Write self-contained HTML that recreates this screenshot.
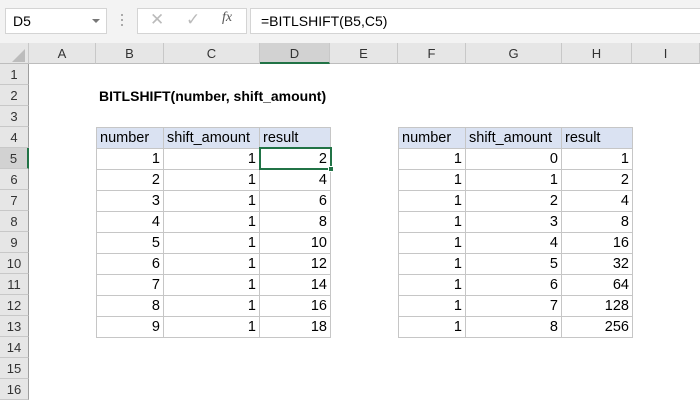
<!DOCTYPE html><html><head><style>
body{margin:0;width:700px;height:400px;overflow:hidden;background:#fff;font-family:"Liberation Sans",Arial,sans-serif;position:relative}
.a{position:absolute;box-sizing:border-box}
.top{left:0;top:0;width:700px;height:43px;background:#f3f3f3}
.box{background:#fff;border:1px solid #d4d4d4}
.ch{top:43px;height:21px;background:#e6e6e6;border-right:1px solid #c8c8c8;border-bottom:1px solid #bdbdbd;font-size:13px;color:#333;text-align:center;line-height:21px}
.rh{left:0;width:29px;height:21px;background:#e6e6e6;border-bottom:1px solid #c8c8c8;border-right:1px solid #9e9e9e;font-size:13px;color:#333;text-align:center;line-height:21px}
.c{height:21px;border-right:1px solid #c6c6c6;border-bottom:1px solid #c6c6c6;font-size:14.5px;line-height:21px;padding:0 3px;color:#000;white-space:nowrap}
.r{text-align:right}
.h{background:#dae2f2}
</style></head><body>
<div class="a top"></div>
<div class="a box" style="left:5px;top:8px;width:102px;height:26px;font-size:14px;line-height:24px;padding-left:7px">D5</div>
<div class="a" style="left:92px;top:19px;width:0;height:0;border-left:4px solid transparent;border-right:4px solid transparent;border-top:4px solid #777"></div>
<div class="a" style="left:121px;top:14px;width:2px;height:14px;background:repeating-linear-gradient(#aaa 0 2px,transparent 2px 5px)"></div>
<div class="a box" style="left:137px;top:8px;width:110px;height:26px"></div>
<div class="a" style="left:150px;top:10px;font-size:17px;color:#bbb">✕</div>
<div class="a" style="left:186px;top:10px;font-size:17px;color:#bbb">✓</div>
<div class="a" style="left:222px;top:10px;font-size:14px;font-style:italic;font-family:'Liberation Serif',serif;color:#555">fx</div>
<div class="a box" style="left:250px;top:8px;width:460px;height:26px;font-size:14px;line-height:24px;padding-left:10px">=BITLSHIFT(B5,C5)</div>
<div class="a" style="left:0;top:43px;width:29px;height:21px;background:#e6e6e6;border-right:1px solid #c8c8c8;border-bottom:1px solid #bdbdbd;box-sizing:border-box"></div>
<div class="a" style="left:12px;top:49px;width:0;height:0;border-left:13px solid transparent;border-bottom:13px solid #bcbcbc"></div>
<div class="a ch" style="left:29px;width:67px">A</div>
<div class="a ch" style="left:96px;width:68px">B</div>
<div class="a ch" style="left:164px;width:96px">C</div>
<div class="a ch" style="left:260px;width:70px;background:#d2d2d2;border-bottom:2px solid #217346">D</div>
<div class="a ch" style="left:330px;width:68px">E</div>
<div class="a ch" style="left:398px;width:68px">F</div>
<div class="a ch" style="left:466px;width:96px">G</div>
<div class="a ch" style="left:562px;width:70px">H</div>
<div class="a ch" style="left:632px;width:68px">I</div>
<div class="a rh" style="top:64px">1</div><div class="a rh" style="top:85px">2</div><div class="a rh" style="top:106px">3</div><div class="a rh" style="top:127px">4</div>
<div class="a rh" style="top:148px;background:#d2d2d2;border-right:2px solid #217346">5</div>
<div class="a rh" style="top:169px">6</div><div class="a rh" style="top:190px">7</div><div class="a rh" style="top:211px">8</div><div class="a rh" style="top:232px">9</div><div class="a rh" style="top:253px">10</div><div class="a rh" style="top:274px">11</div><div class="a rh" style="top:295px">12</div><div class="a rh" style="top:316px">13</div><div class="a rh" style="top:337px">14</div><div class="a rh" style="top:358px">15</div><div class="a rh" style="top:379px">16</div>
<div class="a" style="left:99px;top:85px;height:21px;line-height:22px;font-size:14px;font-weight:bold">BITLSHIFT(number, shift_amount)</div>
<div class="a" style="left:96px;top:127px;width:235px;height:211px;border-left:1px solid #c6c6c6;border-top:1px solid #c6c6c6"></div>
<div class="a" style="left:398px;top:127px;width:235px;height:211px;border-left:1px solid #c6c6c6;border-top:1px solid #c6c6c6"></div>
<div id="t"></div>
<script>
var L=[[97,67],[164,96],[260,71]],R=[[399,67],[466,96],[562,71]];
var h='';
function cell(x,w,y,t,cls){h+='<div class="a c '+cls+'" style="left:'+x+'px;top:'+y+'px;width:'+w+'px;height:21px">'+t+'</div>';}
var hd=['number','shift_amount','result'];
for(var i=0;i<3;i++){cell(L[i][0],L[i][1],128,hd[i],'h');cell(R[i][0],R[i][1],128,hd[i],'h');}
for(var r=0;r<9;r++){var y=149+21*r;
cell(L[0][0],L[0][1],y,r+1,'r');cell(L[1][0],L[1][1],y,1,'r');cell(L[2][0],L[2][1],y,2*(r+1),'r');
cell(R[0][0],R[0][1],y,1,'r');cell(R[1][0],R[1][1],y,r,'r');cell(R[2][0],R[2][1],y,Math.pow(2,r),'r');}
document.getElementById('t').innerHTML=h;
</script>
<div class="a" style="left:259px;top:147px;width:73px;height:23px;border:2px solid #217346"></div>
<div class="a" style="left:328px;top:166px;width:6px;height:6px;background:#217346;border:1px solid #fff"></div>
</body></html>
